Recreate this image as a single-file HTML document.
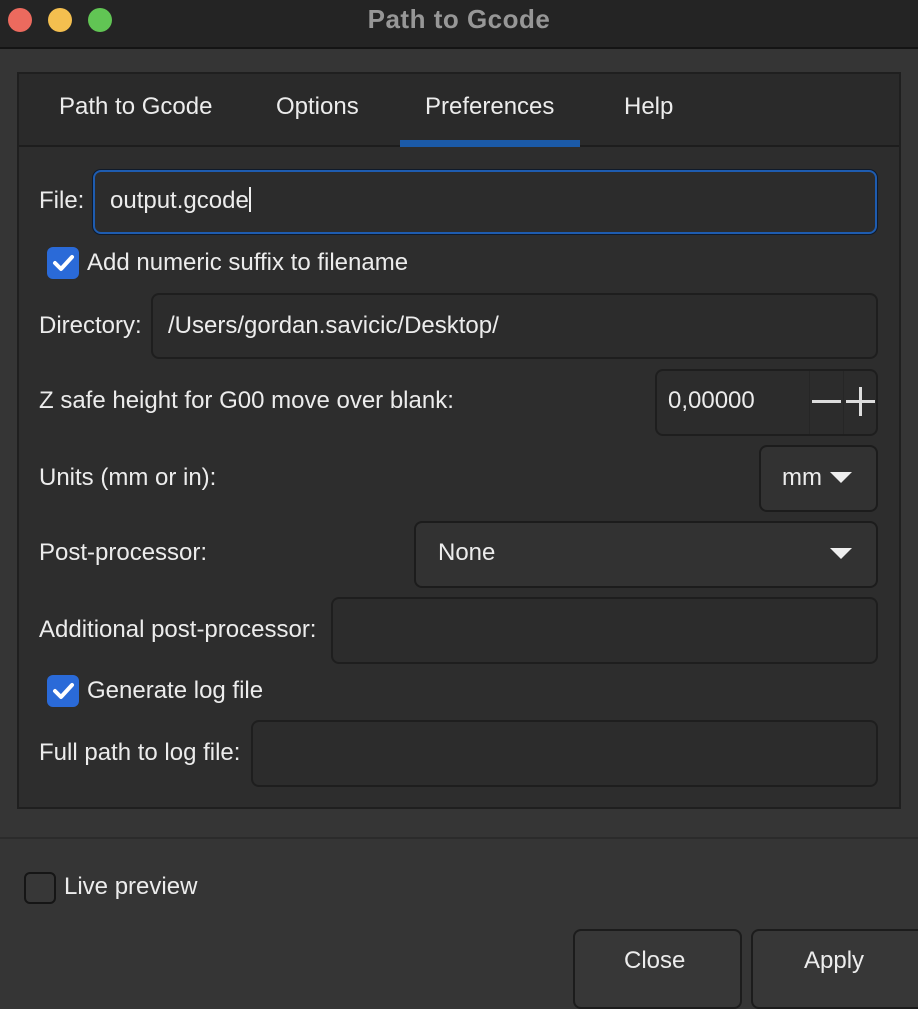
<!DOCTYPE html>
<html><head><meta charset="utf-8"><style>
*{box-sizing:border-box;margin:0;padding:0}
body{width:918px;height:996px;overflow:hidden;background:#353535;font-family:"Liberation Sans",sans-serif;color:#ececec;position:relative;font-size:24px}
.a{position:absolute}
.tb{left:0;top:0;width:918px;height:49px;background:#242424;border-bottom:2px solid #141414}
.dot{width:24px;height:24px;border-radius:50%;top:8px}
.title{left:0;width:918px;top:4px;text-align:center;font-weight:bold;color:#979797;font-size:26px;letter-spacing:0.5px}
.panel{left:17px;top:72px;width:884px;height:737px;background:#2d2d2d;border:2px solid #1f1f1f}
.tabs{left:19px;top:74px;width:880px;height:73px;background:#2a2a2a;border-bottom:2px solid #1d1d1d}
.tab{top:93px;font-size:24px}
.inp{background:#2c2c2c;border:2px solid #1e1e1e;border-radius:8px}
.btn{background:#373737;border:2px solid #1c1c1c;border-radius:8px}
.lbl{font-size:24px}
.cb{width:32px;height:32px;border-radius:6px;background:#2a6ad8}
.tri{width:0;height:0;border-left:11px solid transparent;border-right:11px solid transparent;border-top:11px solid #eee}
</style></head><body>
<div class="a tb"></div>
<div class="a dot" style="left:8px;background:#ec6a5e"></div>
<div class="a dot" style="left:48px;background:#f4bf4f"></div>
<div class="a dot" style="left:88px;background:#61c554"></div>
<div class="a title">Path to Gcode</div>

<div class="a panel"></div>
<div class="a tabs"></div>
<div class="a tab" style="left:59px">Path to Gcode</div>
<div class="a tab" style="left:276px">Options</div>
<div class="a tab" style="left:425px">Preferences</div>
<div class="a tab" style="left:624px">Help</div>
<div class="a" style="left:400px;top:140px;width:180px;height:7px;background:#1b5aa8"></div>

<div class="a lbl" style="left:39px;top:187px">File:</div>
<div class="a inp" style="left:93px;top:170px;width:784px;height:64px;border:2px solid #1e5cb0;box-shadow:0 0 0 1px #0f1a2a"></div>
<div class="a lbl" style="left:110px;top:187px">output.gcode<span style="display:inline-block;width:2px;height:25px;background:#eee;vertical-align:-4px"></span></div>

<div class="a cb" style="left:47px;top:247px"></div>
<svg class="a" style="left:47px;top:247px" width="32" height="32"><path d="M8 16 L14 22 L25 10" stroke="#fff" stroke-width="4" fill="none" stroke-linecap="round" stroke-linejoin="round"/></svg>
<div class="a lbl" style="left:87px;top:249px">Add numeric suffix to filename</div>

<div class="a lbl" style="left:39px;top:312px">Directory:</div>
<div class="a inp" style="left:151px;top:293px;width:727px;height:66px"></div>
<div class="a lbl" style="left:168px;top:312px">/Users/gordan.savicic/Desktop/</div>

<div class="a lbl" style="left:39px;top:387px">Z safe height for G00 move over blank:</div>
<div class="a inp" style="left:655px;top:369px;width:223px;height:67px"></div>
<div class="a" style="left:809px;top:371px;width:1px;height:63px;background:#262626"></div>
<div class="a" style="left:843px;top:371px;width:1px;height:63px;background:#262626"></div>
<div class="a lbl" style="left:668px;top:387px">0,00000</div>
<div class="a" style="left:812px;top:400px;width:29px;height:3px;background:#ddd"></div>
<div class="a" style="left:846px;top:400px;width:29px;height:3px;background:#ddd"></div>
<div class="a" style="left:859px;top:387px;width:3px;height:29px;background:#ddd"></div>

<div class="a lbl" style="left:39px;top:464px">Units (mm or in):</div>
<div class="a btn" style="left:759px;top:445px;width:119px;height:67px;background:#323232"></div>
<div class="a lbl" style="left:782px;top:464px">mm</div>
<div class="a tri" style="left:830px;top:472px"></div>

<div class="a lbl" style="left:39px;top:539px">Post-processor:</div>
<div class="a btn" style="left:414px;top:521px;width:464px;height:67px;background:#323232"></div>
<div class="a lbl" style="left:438px;top:539px">None</div>
<div class="a tri" style="left:830px;top:548px"></div>

<div class="a lbl" style="left:39px;top:616px">Additional post-processor:</div>
<div class="a inp" style="left:331px;top:597px;width:547px;height:67px"></div>

<div class="a cb" style="left:47px;top:675px"></div>
<svg class="a" style="left:47px;top:675px" width="32" height="32"><path d="M8 16 L14 22 L25 10" stroke="#fff" stroke-width="4" fill="none" stroke-linecap="round" stroke-linejoin="round"/></svg>
<div class="a lbl" style="left:87px;top:677px">Generate log file</div>

<div class="a lbl" style="left:39px;top:739px">Full path to log file:</div>
<div class="a inp" style="left:251px;top:720px;width:627px;height:67px"></div>

<div class="a" style="left:0;top:837px;width:918px;height:2px;background:#2b2b2b"></div>

<div class="a" style="left:24px;top:872px;width:32px;height:32px;border-radius:6px;background:#373737;border:2px solid #151515"></div>
<div class="a lbl" style="left:64px;top:873px">Live preview</div>

<div class="a btn" style="left:573px;top:929px;width:169px;height:80px"></div>
<div class="a lbl" style="left:624px;top:947px">Close</div>
<div class="a btn" style="left:751px;top:929px;width:180px;height:80px"></div>
<div class="a lbl" style="left:804px;top:947px">Apply</div>
</body></html>
